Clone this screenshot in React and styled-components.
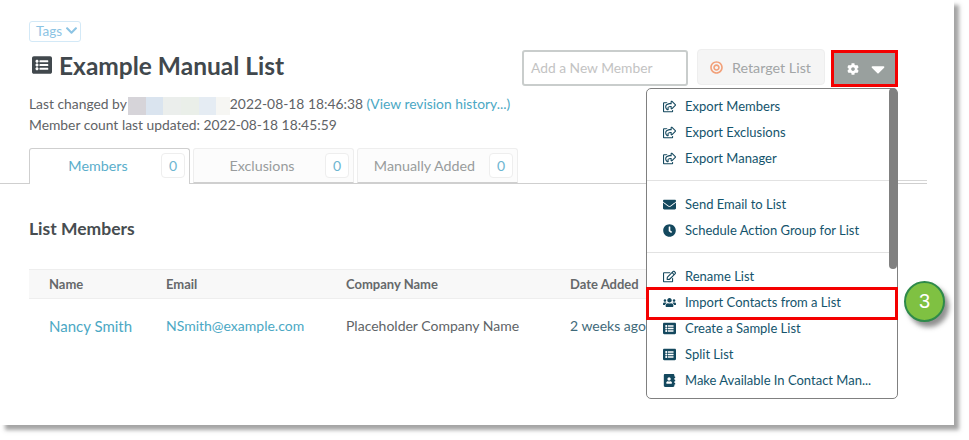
import React from 'react';
import styled, { createGlobalStyle } from 'styled-components';
import {
  FaListAlt, FaRegShareSquare, FaEnvelope, FaClock, FaRegEdit, FaUsers,
  FaAddressBook, FaCog, FaCaretDown, FaChevronDown, FaBullseye,
} from 'react-icons/fa';

const GlobalStyle = createGlobalStyle`
  html, body { margin: 0; padding: 0; background: #fff; }
  body { width: 969px; height: 440px; overflow: hidden; font-family: Lato, "Open Sans", sans-serif; }
`;

const Shot = styled.div`
  position: relative;
  box-sizing: border-box;
  width: 954px;
  height: 425px;
  padding: 21px 0 0;
  background: #fff;
  box-shadow: 5px 5px 4px rgba(90, 90, 90, 0.55);
`;

const Content = styled.div`
  padding: 0 0 0 29px;
`;

const TagsButton = styled.div`
  display: flex;
  align-items: center;
  gap: 3px;
  box-sizing: border-box;
  height: 21px;
  width: 52px;
  padding: 0 0 2px 6px;
  border: 1px solid #d3e9f7;
  border-radius: 3px;
  font-size: 13.5px;
  color: #8cc4e4;
`;

const TitleRow = styled.div`
  display: flex;
  align-items: flex-start;
  justify-content: space-between;
  margin: 8px 0 0;
  padding: 0 56px 0 0;
  height: 44px;
`;

const Title = styled.h1`
  display: flex;
  align-items: center;
  gap: 7px;
  margin: 0 0 0 3px;
  height: 30px;
  font-size: 24.5px;
  font-weight: 700;
  color: #41484d;
  svg { font-size: 20px; margin-top: -1px; }
`;

const Actions = styled.div`
  display: flex;
  align-items: flex-start;
  gap: 6px;
`;

const MemberInput = styled.div`
  box-sizing: border-box;
  width: 166px;
  height: 36px;
  margin: 0 3px 0 0;
  padding: 0 0 0 7px;
  border: 2px solid #c9cdcc;
  border-radius: 3px;
  font-size: 13.8px;
  line-height: 32px;
  color: #c3c3c3;
`;

const RetargetButton = styled.div`
  display: flex;
  align-items: center;
  gap: 9px;
  box-sizing: border-box;
  width: 128px;
  height: 36px;
  margin-top: -1px;
  padding: 0 0 0 12px;
  border: 1px solid #eeeeee;
  border-radius: 4px;
  background: #f5f5f5;
  font-size: 14.3px;
  color: #a2a5a6;
  svg { color: #f2a079; font-size: 13px; }
`;

const GearButton = styled.div`
  display: flex;
  align-items: center;
  gap: 8px;
  box-sizing: border-box;
  width: 67px;
  height: 37px;
  padding: 0 0 0 13px;
  border: 3px solid #f40000;
  background: #99a09e;
  color: #fff;
`;

const Meta = styled.div`
  font-size: 13.85px;
  line-height: 20px;
  color: #5f6366;
`;

const Redacted = styled.span`
  display: inline-flex;
  vertical-align: middle;
  height: 18px;
  margin: 0 0 0 1px;
  width: 102px;
`;

const RedactedPart = styled.span`
  flex: ${(p) => p.$w};
  background: ${(p) => p.$c};
`;

const Link = styled.span`
  color: #4ba8c4;
`;

const TabBar = styled.div`
  display: flex;
  gap: 3px;
  height: 35px;
  margin: 13px 27px 0 -29px;
  padding-left: 29px;
  border-bottom: 1px solid #cfcfcf;
`;

const Tab = styled.div`
  display: flex;
  align-items: center;
  box-sizing: border-box;
  width: 161px;
  height: ${(p) => (p.$active ? '36px' : '35px')};
  padding: ${(p) => (p.$active ? '0 4px 1px 0' : '0 4px 0 0')};
  border: 1px solid ${(p) => (p.$active ? '#cfcfcf' : '#eeeeee')};
  border-bottom: ${(p) => (p.$active ? 'none' : '1px solid #cfcfcf')};
  border-radius: 3px 3px 0 0;
  background: ${(p) => (p.$active ? '#fff' : '#fcfcfc')};
  font-size: 14.3px;
  color: ${(p) => (p.$active ? '#5aaecb' : '#999c9d')};
`;

const TabLabel = styled.span`
  flex: 1;
  text-align: center;
  padding-left: ${(p) => p.$pad || 0}px;
`;

const Count = styled.span`
  box-sizing: border-box;
  width: 24px;
  height: 25px;
  border: 1px solid #eeeeee;
  border-radius: 4px;
  background: #fff;
  font-size: 14px;
  line-height: 23px;
  text-align: center;
  color: #6db6d1;
`;

const SectionTitle = styled.h2`
  margin: 33px 0 0;
  height: 24px;
  font-size: 17.5px;
  line-height: 24px;
  font-weight: 700;
  color: #474d50;
`;

const Table = styled.div`
  width: 617px;
  margin-top: 28px;
`;

const gridColumns = '117px 180px 224px 1fr';

const HeadRow = styled.div`
  display: grid;
  grid-template-columns: ${gridColumns};
  box-sizing: border-box;
  height: 30px;
  padding: 0 0 0 20px;
  align-items: center;
  border-top: 1px solid #eeeeee;
  border-bottom: 1px solid #eeeeee;
  background: #f8f8f8;
  font-size: 13px;
  font-weight: 700;
  color: #66696b;
`;

const BodyRow = styled.div`
  display: grid;
  grid-template-columns: ${gridColumns};
  padding: 0 0 0 20px;
  height: 54px;
  align-items: center;
  font-size: 14px;
  color: #606467;
  white-space: nowrap;
`;

const NameLink = styled(Link)`
  font-size: 15px;
`;

const DateCell = styled.span`
  color: #3f6a7a;
`;

const HrTail = styled.div`
  position: absolute;
  left: 898px;
  top: 180px;
  width: 29px;
  height: 1px;
  background: #d6d6d6;
`;

const Menu = styled.div`
  position: absolute;
  left: 646px;
  top: 88px;
  box-sizing: border-box;
  width: 252px;
  height: 311px;
  padding: 4px 0 0;
  border: 1px solid #808080;
  border-radius: 5px;
  background: #fff;
`;

const MenuDivider = styled.div`
  height: 1px;
  margin: 9px 0 10px;
  background: #e2e2e2;
`;

const MenuItem = styled.div`
  display: flex;
  align-items: center;
  height: 26px;
  padding: 0 0 0 16px;
  font-size: 13px;
  color: #14546c;
  white-space: nowrap;
  svg { flex: none; width: 13px; height: 13px; margin-right: 9px; color: #14485e; }
`;

const Scrollbar = styled.div`
  position: absolute;
  top: -1px;
  right: 0;
  width: 8px;
  height: 181px;
  border-radius: 4px;
  background: #808080;
`;

const Highlight = styled.div`
  position: absolute;
  left: 646px;
  top: 287px;
  box-sizing: border-box;
  width: 252px;
  height: 33px;
  border: 3px solid #f40000;
`;

const Callout = styled.div`
  position: absolute;
  left: 904px;
  top: 281px;
  box-sizing: border-box;
  width: 41px;
  height: 41px;
  border: 2px solid #2e8a4a;
  border-radius: 50%;
  background: #7fc142;
  box-shadow: 4px 5px 5px rgba(70, 70, 70, 0.6);
  font-family: "Liberation Sans", Arial, sans-serif;
  font-size: 20px;
  line-height: 36px;
  text-align: center;
  color: #fff;
`;

const redactedParts = [
  ['18', '#d6d4d9'], ['17', '#dae4ef'], ['18', '#ebeeec'], ['18', '#eaefe9'],
  ['17', '#e5ecf3'], ['14', '#f6f6f3'],
];

const menuGroups = [
  [
    [FaRegShareSquare, 'Export Members'],
    [FaRegShareSquare, 'Export Exclusions'],
    [FaRegShareSquare, 'Export Manager'],
  ],
  [
    [FaEnvelope, 'Send Email to List'],
    [FaClock, 'Schedule Action Group for List'],
  ],
  [
    [FaRegEdit, 'Rename List'],
    [FaUsers, 'Import Contacts from a List'],
    [FaListAlt, 'Create a Sample List'],
    [FaListAlt, 'Split List'],
    [FaAddressBook, 'Make Available In Contact Man...'],
  ],
];

const App = () => {
  return (
    <Shot>
      <GlobalStyle />
      <Content>
        <TagsButton>Tags <FaChevronDown size={13} /></TagsButton>
        <TitleRow>
          <Title><FaListAlt />Example Manual List</Title>
          <Actions>
            <MemberInput>Add a New Member</MemberInput>
            <RetargetButton><FaBullseye />Retarget List</RetargetButton>
            <GearButton><FaCog size={12} /><FaCaretDown size={22} /></GearButton>
          </Actions>
        </TitleRow>
        <Meta>
          <div>
            Last changed by
            <Redacted>
              {redactedParts.map(([w, c]) => <RedactedPart key={c} $w={w} $c={c} />)}
            </Redacted>
            2022-08-18 18:46:38 <Link>(View revision history...)</Link>
          </div>
          <div>Member count last updated: 2022-08-18 18:45:59</div>
        </Meta>
        <TabBar>
          <Tab $active><TabLabel $pad={5}>Members</TabLabel><Count>0</Count></Tab>
          <Tab><TabLabel $pad={5}>Exclusions</TabLabel><Count>0</Count></Tab>
          <Tab><TabLabel $pad={2}>Manually Added</TabLabel><Count>0</Count></Tab>
        </TabBar>
        <SectionTitle>List Members</SectionTitle>
        <Table>
          <HeadRow>
            <span>Name</span><span>Email</span><span>Company Name</span><span>Date Added</span>
          </HeadRow>
          <BodyRow>
            <NameLink>Nancy Smith</NameLink>
            <Link>NSmith@example.com</Link>
            <span>Placeholder Company Name</span>
            <DateCell>2 weeks ago</DateCell>
          </BodyRow>
        </Table>
      </Content>
      <HrTail />
      <Menu>
        <Scrollbar />
        {menuGroups.map((group, i) => (
          <div key={i}>
            {group.map(([Icon, label]) => (
              <MenuItem key={label}><Icon />{label}</MenuItem>
            ))}
            {i < menuGroups.length - 1 && <MenuDivider />}
          </div>
        ))}
      </Menu>
      <Highlight />
      <Callout>3</Callout>
    </Shot>
  );
};

export default App;
